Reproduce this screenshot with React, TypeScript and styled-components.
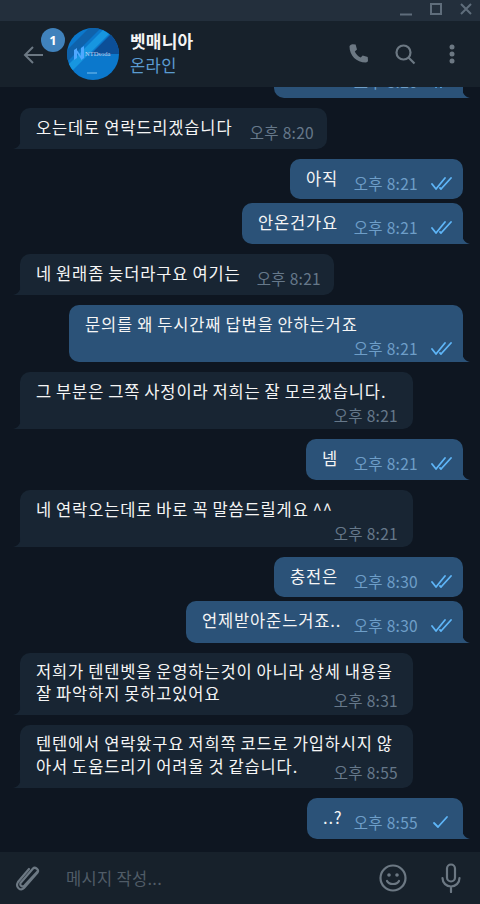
import React from "react";
import styled, { createGlobalStyle } from "styled-components";

const Global = createGlobalStyle`
  html, body { margin: 0; padding: 0; background: #0e1621; }
  #root { width: 480px; height: 904px; }
  * { box-sizing: border-box; }
`;
const FONT = `"Noto Sans CJK KR", "Noto Sans", sans-serif`;

const Page = styled.div`
  width: 480px; height: 904px; display: flex; flex-direction: column; overflow: hidden;
  background: #0e1621; font-family: ${FONT};
`;
const TitleBar = styled.div`
  height: 21px; flex: none; background: #232f3c; display: flex; justify-content: flex-end;
  align-items: center; gap: 16px; padding: 0 7px 4px 0; color: #5f6d7b;
`;
const Header = styled.header`
  height: 66px; flex: none; background: #17212b; display: flex; align-items: center; padding: 0 16px 0 22px;
`;
const BackWrap = styled.div`
  position: relative; width: 45px; height: 52px; display: flex; align-items: center; margin-top: 2px;
`;
const Badge = styled.div`
  position: absolute; left: 19px; top: -1px; width: 24px; height: 24px; border-radius: 50%;
  background: #4082bc; color: #fff; font: 700 13px "Noto Sans", sans-serif;
  display: flex; align-items: center; justify-content: center;
`;
const Avatar = styled.div`
  width: 52px; height: 52px; border-radius: 50%; flex: none; margin-right: 11px; overflow: hidden;
`;
const Peer = styled.div`
  flex: 1; display: flex; flex-direction: column; gap: 4px; padding-bottom: 3px;
`;
const PeerName = styled.div`
  color: #f5f5f5; font-size: 17px; font-weight: 700; line-height: 20px; letter-spacing: .2px;
`;
const PeerStatus = styled.div`
  color: #5b9bd0; font-size: 16.5px; line-height: 20px; letter-spacing: .4px;
`;
const HeaderIcons = styled.div`
  display: flex; align-items: center; gap: 23px; color: #6c7883;
`;
const List = styled.main`
  flex: 1; min-height: 0; overflow: hidden; display: flex; flex-direction: column; justify-content: flex-end;
  padding: 0 10px 13px 20px; gap: 10px;
`;
const Group = styled.div`
  display: flex; flex-direction: column; align-items: flex-end; gap: 4px;
`;
const Bubble = styled.div<{ $out?: boolean; $w: number; $h: number; $tail?: boolean; $stack?: boolean }>`
  position: relative; flex: none; width: ${p => p.$w}px; height: ${p => p.$h}px;
  align-self: ${p => (p.$out ? "flex-end" : "flex-start")};
  margin-right: ${p => (p.$out ? "7px" : "0")};
  background: ${p => (p.$out ? "#2b5278" : "#182533")};
  border-radius: 10px;
  padding: 7px ${p => (p.$out ? "10px" : p.$stack ? "15px" : "13px")} 0 16px;
  display: flex;
  flex-direction: ${p => (p.$stack ? "column" : "row")};
  justify-content: ${p => (p.$stack ? "flex-start" : "space-between")};
  color: #f5f5f5; font-size: 16.5px; letter-spacing: .85px; word-spacing: -.5px;
  ${p => p.$tail && (p.$out
    ? `border-bottom-right-radius: 0;`
    : `border-bottom-left-radius: 0;`)}
`;
const Text = styled.div<{ $lh: number }>`
  display: flex; flex-direction: column; align-items: flex-start; white-space: pre; line-height: ${p => p.$lh}px;
`;
const Line = styled.span`display: block;`;
const Meta = styled.div<{ $out?: boolean; $stack?: boolean; $mt: number }>`
  display: flex; align-items: center; gap: 13px; flex: none;
  color: ${p => (p.$out ? "#6e9ec8" : "#66788a")};
  font-size: 15.5px; line-height: 20px; letter-spacing: .3px; word-spacing: 0; white-space: nowrap;
  margin-top: ${p => p.$mt}px;
  align-self: ${p => (p.$stack ? "flex-end" : "flex-start")};
`;
const Tail = styled.svg<{ $out?: boolean }>`
  position: absolute; bottom: 0; width: 8px; height: 10px; display: block;
  ${p => (p.$out ? "right: -7px;" : "left: -7px;")}
`;
const Composer = styled.footer`
  height: 52px; flex: none; background: #17212b; display: flex; align-items: center; padding: 0 18px 0 15px; color: #6c7883;
`;
const Placeholder = styled.div`
  flex: 1; padding-left: 24px; color: #505c67; font-size: 16.5px; letter-spacing: .3px;
`;
const ComposerIcons = styled.div`display: flex; align-items: center; gap: 33px;`;

type M = { out?: boolean; w: number; h: number; t: string[]; time: string; tail?: boolean; stack?: boolean; single?: boolean; lh?: number; mt?: number };

const Checks = ({ single }: { single?: boolean }) => (
  <svg width="22" height="14" viewBox="0 0 22 14" fill="none" stroke="#5eb5f7" strokeWidth="1.8" strokeLinecap="round" strokeLinejoin="round">
    {single ? <path d="M3 8l4 4 9-10" /> : <><path d="M1 8l4 5L14 2" /><path d="M9 12l1 1L20 2" /></>}
  </svg>
);

const BubbleTail = ({ out }: { out?: boolean }) => (
  <Tail $out={out} viewBox="0 0 8 10">
    {out
      ? <path d="M0 0C0 5 3 9 8 10H0Z" fill="#2b5278" />
      : <path d="M8 0C8 5 5 9 0 10H8Z" fill="#182533" />}
  </Tail>
);

const Msg = ({ m }: { m: M }) => (
  <Bubble $out={m.out} $w={m.w} $h={m.h} $tail={m.tail} $stack={m.stack}>
    <Text $lh={m.lh ?? 24}>
      {m.t.map((l, i) => <Line key={i}>{l}</Line>)}
    </Text>
    <Meta $out={m.out} $stack={m.stack} $mt={m.mt ?? (m.stack ? 2 : 7)}>
      <span>{m.time}</span>
      {m.out && <Checks single={m.single} />}
    </Meta>
    {m.tail && <BubbleTail out={m.out} />}
  </Bubble>
);

const groups: M[][] = [
  [{ out: true, w: 189, h: 41, t: [], time: "오후 8:20", tail: true }],
  [{ w: 307, h: 41, t: ["오는데로 연락드리겠습니다"], time: "오후 8:20", tail: true }],
  [
    { out: true, w: 173, h: 40, t: ["아직"], time: "오후 8:21" },
    { out: true, w: 221, h: 41, t: ["안온건가요"], time: "오후 8:21", tail: true },
  ],
  [{ w: 314, h: 41, t: ["네 원래좀 늦더라구요 여기는"], time: "오후 8:21", tail: true }],
  [{ out: true, w: 394, h: 57, t: ["문의를 왜 두시간째 답변을 안하는거죠"], time: "오후 8:21", tail: true, stack: true }],
  [{ w: 393, h: 57, t: ["그 부분은 그쪽 사정이라 저희는 잘 모르겠습니다."], time: "오후 8:21", tail: true, stack: true }],
  [{ out: true, w: 157, h: 41, t: ["넴"], time: "오후 8:21", tail: true }],
  [{ w: 393, h: 57, t: ["네 연락오는데로 바로 꼭 말씀드릴게요 ^^"], time: "오후 8:21", tail: true, stack: true }],
  [
    { out: true, w: 189, h: 40, t: ["충전은"], time: "오후 8:30" },
    { out: true, w: 277, h: 42, t: ["언제받아준느거죠.."], time: "오후 8:30", tail: true },
  ],
  [{ w: 393, h: 62, t: ["저희가 텐텐벳을 운영하는것이 아니라 상세 내용을", "잘 파악하지 못하고있어요"], time: "오후 8:31", tail: true, stack: true, lh: 22, mt: -14 }],
  [{ w: 393, h: 63, t: ["텐텐에서 연락왔구요 저희쪽 코드로 가입하시지 않", "아서 도움드리기 어려울 것 같습니다."], time: "오후 8:55", tail: true, stack: true, lh: 23, mt: -16 }],
  [{ out: true, w: 156, h: 41, t: ["..?"], time: "오후 8:55", tail: true, single: true }],
];

export default function App() {
  return (
    <Page>
      <Global />
      <TitleBar>
        <svg width="14" height="14" viewBox="0 0 14 14" fill="none" stroke="currentColor" strokeWidth="2"><path d="M1 12.500h12" /></svg>
        <svg width="14" height="14" viewBox="0 0 14 14" fill="none" stroke="currentColor" strokeWidth="2"><rect x="2" y="2" width="10" height="10" /></svg>
        <svg width="14" height="14" viewBox="0 0 14 14" fill="none" stroke="currentColor" strokeWidth="2"><path d="M2 2l10 10M12 2L2 12" /></svg>
      </TitleBar>
      <Header>
        <BackWrap>
          <svg width="22" height="22" viewBox="0 0 22 22" fill="none" stroke="#6c7883" strokeWidth="2"><path d="M21 11H3M11 3l-8 8 8 8" /></svg>
          <Badge>1</Badge>
        </BackWrap>
        <Avatar>
          <svg width="52" height="52" viewBox="0 0 52 52">
            <rect width="52" height="52" fill="#0b78cc" />
            <path d="M0 22L22 0H34L0 34Z" fill="#0f62ab" />
            <path d="M0 38L36 2 42 6 4 44Z" fill="#1796e0" />
            <path d="M24 26L46 4 52 12V26Z" fill="#0c4f98" />
            <path d="M7 22l3-2v10l-3 2ZM14 20l3-2v12l-3 2ZM10 22l4 6v3l-4-6Z" fill="#4fa8ff" />
            <text x="18" y="28" fontSize="6.500" fill="#c3d2ee" fontFamily="Liberation Serif">NTDsoda</text>
            <path d="M20 45h10" stroke="#7cc0ee" strokeWidth="1" />
          </svg>
        </Avatar>
        <Peer>
          <PeerName>벳매니아</PeerName>
          <PeerStatus>온라인</PeerStatus>
        </Peer>
        <HeaderIcons>
          <svg width="24" height="24" viewBox="0 0 24 24" fill="currentColor"><path d="M6.600 2.200l3 .4 1.400 5-2.200 1.900c1 2.500 3.200 4.800 5.900 6l2-2.100 5 1.500.3 3.300c0 1.300-1 2.300-2.300 2.300C10.500 20.500 3.500 13.500 3.500 4.500c0-1.300 1.700-2.300 3.100-2.300z" /></svg>
          <svg width="24" height="24" viewBox="0 0 24 24" fill="none" stroke="currentColor" strokeWidth="2.200"><circle cx="10.500" cy="10.500" r="7" /><path d="M15.500 15.500l6 6" /></svg>
          <svg width="24" height="24" viewBox="0 0 24 24" fill="currentColor"><circle cx="12" cy="5" r="2.500" /><circle cx="12" cy="12" r="2.500" /><circle cx="12" cy="19" r="2.500" /></svg>
        </HeaderIcons>
      </Header>
      <List>
        {groups.map((g, i) => (
          <Group key={i}>
            {g.map((m, j) => <Msg key={j} m={m} />)}
          </Group>
        ))}
      </List>
      <Composer>
        <svg width="27" height="30" viewBox="0 0 27 30" fill="none" stroke="currentColor" strokeWidth="2.200" strokeLinecap="round"><path d="M23 8L9.500 22.500c-2 2-5 .5-4-2.500L18 5.500c2-2 6.500 1 4.500 4L9 25c-3.500 3.500-9-1-6-6L14 6" /></svg>
        <Placeholder>메시지 작성...</Placeholder>
        <ComposerIcons>
          <svg width="28" height="28" viewBox="0 0 28 28" fill="none" stroke="currentColor" strokeWidth="2.200"><circle cx="14" cy="14" r="12.500" /><circle cx="10" cy="11" r="1.800" fill="currentColor" stroke="none" /><circle cx="18" cy="11" r="1.800" fill="currentColor" stroke="none" /><path d="M8 17c2 4 10 4 12 0" strokeLinecap="round" /></svg>
          <svg width="22" height="30" viewBox="0 0 22 30" fill="none" stroke="currentColor" strokeWidth="2.200" strokeLinecap="round"><rect x="7" y="1.500" width="8" height="17" rx="4" /><path d="M2.500 15c0 5 4 8.500 8.500 8.500s8.500-3.500 8.500-8.500M11 24v5" /></svg>
        </ComposerIcons>
      </Composer>
    </Page>
  );
}
